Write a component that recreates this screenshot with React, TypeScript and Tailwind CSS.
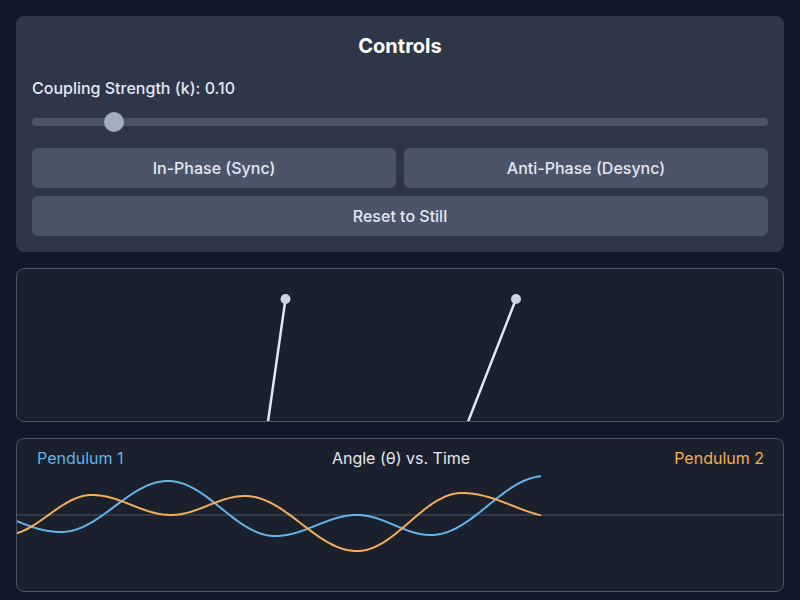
import React, { useState } from 'react';

type Pt = [number, number];

// turning points of each trace, screen coords (joined with half-cosine segments)
const blueExt: Pt[] = [[-46, 502], [61, 532], [168, 481], [275, 536], [357, 515], [431, 535], [545, 476]];
const orangeExt: Pt[] = [[5, 535], [92, 495], [171, 515], [245, 496], [357, 551], [462, 493], [562, 518]];

const sample = (ext: Pt[], x: number) => {
  for (let i = 0; i < ext.length - 1; i++) {
    const [x0, y0] = ext[i];
    const [x1, y1] = ext[i + 1];
    if (x >= x0 && x <= x1) {
      const f = (x - x0) / (x1 - x0);
      return y0 + (y1 - y0) * (1 - Math.cos(Math.PI * f)) / 2;
    }
  }
  return ext[ext.length - 1][1];
};

const trace = (ext: Pt[]) => {
  const pts: string[] = [];
  for (let x = 16; x <= 541; x += 1) pts.push(`${x},${sample(ext, x).toFixed(2)}`);
  return pts.join(' ');
};

const App = () => {
  const [k] = useState(0.1);

  return (
    <div className="min-h-screen bg-[#111827] p-4 flex flex-col gap-4 font-[Inter,sans-serif]">
      {/* controls */}
      <div className="bg-[#2d3748] rounded-lg p-4">
        <h2 className="text-xl font-bold text-center text-white mb-4">Controls</h2>
        <label className="block text-base font-medium text-[#e2e8f0]">
          Coupling Strength (k): {k.toFixed(2)}
        </label>
        <div className="relative mt-3 h-5 flex items-center">
          <div className="h-2 w-full rounded-full bg-[#4a5568]" />
          <div
            className="absolute top-0 w-5 h-5 rounded-full bg-[#a0aec0]"
            style={{ left: `calc((100% - 20px) * ${k})` }}
          />
        </div>
        <div className="mt-4 grid grid-cols-2 gap-2">
          <button className="h-10 rounded-md bg-[#4a5568] text-[#e2e8f0] font-medium">In-Phase (Sync)</button>
          <button className="h-10 rounded-md bg-[#4a5568] text-[#e2e8f0] font-medium">Anti-Phase (Desync)</button>
        </div>
        <button className="mt-2 w-full h-10 rounded-md bg-[#4a5568] text-[#e2e8f0] font-medium">Reset to Still</button>
      </div>

      {/* pendulums */}
      <div className="h-[154px] border border-[#4a5568] rounded-lg bg-[#1a202c] overflow-hidden">
        <svg className="w-full h-full block" viewBox="17 269 766 152" preserveAspectRatio="none">
          <line x1={285.5} y1={299} x2={266.5} y2={432} stroke="#e2e8f0" strokeWidth={2.5} />
          <line x1={516} y1={299} x2={464} y2={432} stroke="#e2e8f0" strokeWidth={2.5} />
          <circle cx={285.5} cy={299} r={5} fill="#cbd5e0" />
          <circle cx={516} cy={299} r={5} fill="#cbd5e0" />
        </svg>
      </div>

      {/* chart */}
      <div className="h-[154px] border border-[#4a5568] rounded-lg bg-[#1a202c] overflow-hidden">
        <svg className="w-full h-full block" viewBox="17 439 766 152" preserveAspectRatio="none">
          <line x1={17} y1={515} x2={783} y2={515} stroke="#4a5568" strokeWidth={1} />
          <polyline points={trace(blueExt)} fill="none" stroke="#63b3ed" strokeWidth={2} />
          <polyline points={trace(orangeExt)} fill="none" stroke="#f6ad55" strokeWidth={2} />
          <g fontFamily="Inter, sans-serif" fontSize={16}>
            <text x={37} y={464} fill="#63b3ed">Pendulum 1</text>
            <text x={401} y={464} fill="#e2e8f0" textAnchor="middle">Angle (θ) vs. Time</text>
            <text x={764} y={464} fill="#f6ad55" textAnchor="end">Pendulum 2</text>
          </g>
        </svg>
      </div>
    </div>
  );
};

export default App;
